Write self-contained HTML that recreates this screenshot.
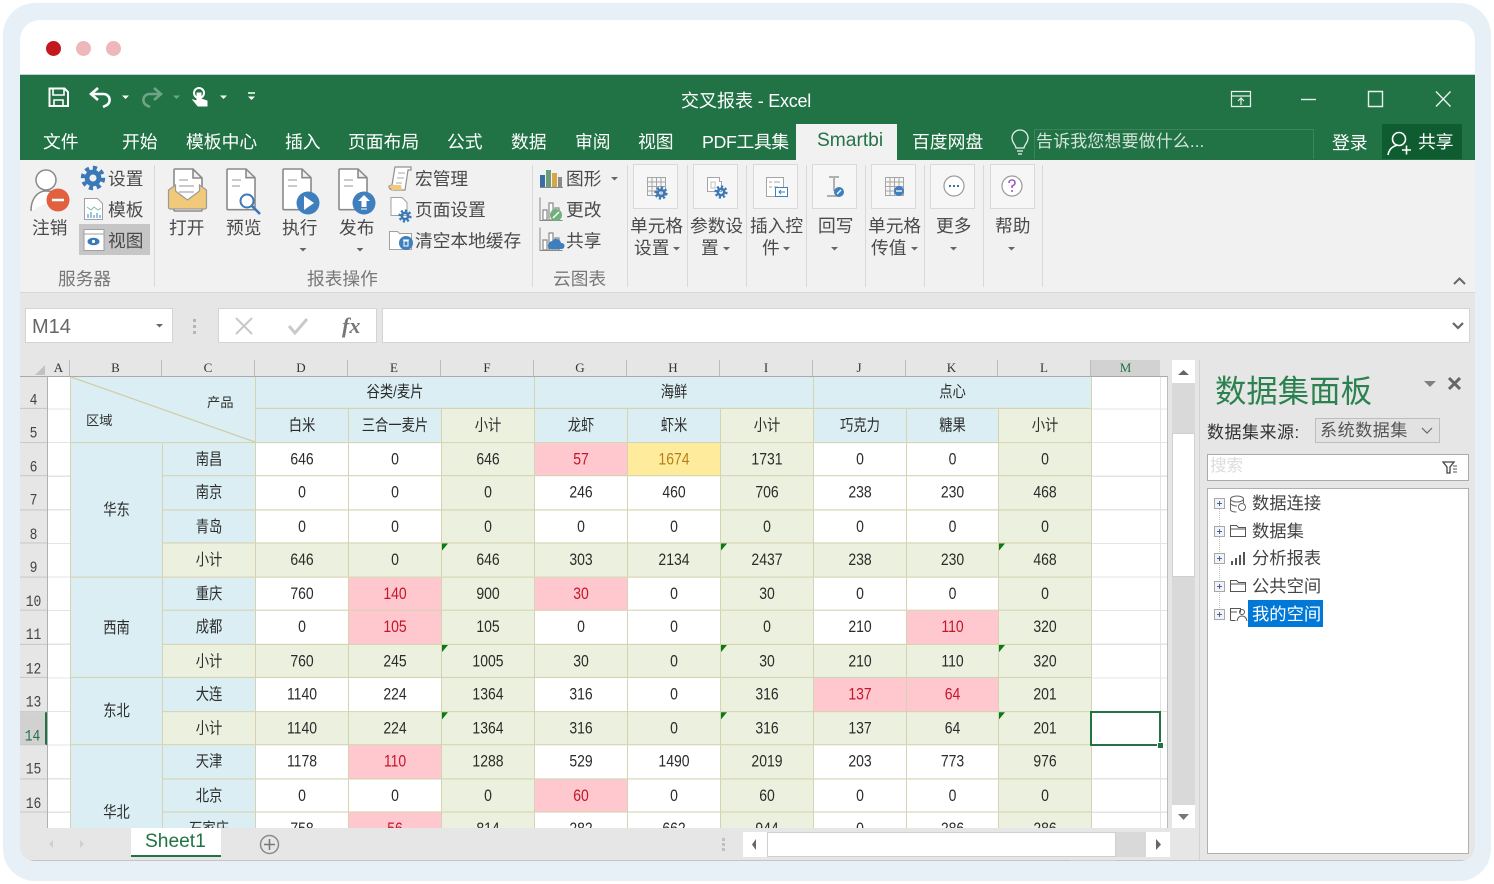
<!DOCTYPE html>
<html lang="zh"><head><meta charset="utf-8"><title>交叉报表 - Excel</title>
<style>
html,body{margin:0;padding:0;background:#fff}
body{width:1494px;height:884px;position:relative;overflow:hidden;font-family:"Liberation Sans","Noto Sans CJK SC",sans-serif;color:#444}
.outer{position:absolute;left:3px;top:3px;width:1488px;height:878px;background:#e6f0f6;border-radius:32px}
.win{position:absolute;left:20px;top:20px;width:1455px;height:841px;overflow:hidden;border-radius:20px 20px 14px 14px;background:#fff}
.in{position:absolute;left:-20px;top:-20px;width:1494px;height:884px;filter:blur(.35px)}
.b{position:absolute}
.t{position:absolute;line-height:20px;white-space:nowrap;font-size:18px;color:#4a4a4a}
.w{color:#fff}
.m{font-size:17.8px}
.rb{font-size:17.7px;margin-top:1px}
.gl{color:#777;font-size:17.7px;margin-top:1px}
.dot{position:absolute;top:41px;width:15px;height:15px;border-radius:50%}
.sep{position:absolute;width:1px;top:165px;height:122px;background:#d8d8d8}
.bx{position:absolute;top:164px;height:45px;background:#f6f6f6;border:1px solid #d9d9d9;box-sizing:border-box}
svg.ov{position:absolute;left:0;top:0;width:1494px;height:884px;z-index:5;pointer-events:none}
.cols{position:absolute;left:48px;top:360px;height:16px;display:grid;grid-template-columns:22px 92px 93px 93px 93px 93px 93px 93px 93px 93px 92px 93px 69px;background:#e6e6e6}
.cols div{font:13px/16px "Liberation Serif",serif;text-align:center;color:#333;border-right:1px solid #bcbcbc;box-sizing:border-box}
.sheet{position:absolute;left:20px;top:376px;width:1148px;height:452px;overflow:hidden;background:#fff;border-top:1px solid #aaa;box-sizing:border-box;border-right:1px solid #bbb}
.sc{position:absolute;left:0;top:-1px;width:1148px;height:420px;transform:scaleY(1.18);transform-origin:0 0}
.lines{position:absolute;left:28px;top:0;width:1120px;height:420px;background:repeating-linear-gradient(to bottom,transparent 0,transparent 27.48px,#e4e4e4 27.48px,#e4e4e4 28.48px)}
.rows{position:absolute;left:0;top:0;width:28px;border-right:1px solid #b0b0b0;box-sizing:border-box}
.rows div{height:28.48px;box-sizing:border-box;background:#e6e6e6;border-bottom:1px solid #c9c9c9;font:13px/15px "Liberation Mono",monospace;color:#444;text-align:center;padding-top:13px}
.rows .sel{background:#d1d1d1;color:#217346;border-right:2px solid #217346}
.g{position:absolute;left:51px;top:0;display:grid;grid-template-columns:92px 93px 93px 93px 93px 93px 93px 93px 93px 92px 93px;grid-auto-rows:28.48px;box-shadow:-1px 0 0 #d6d3b2}
.g div{box-sizing:border-box;border-right:1px solid #d6d3b2;border-bottom:1px solid #d6d3b2;background:#fff;text-align:center;font-size:14px;line-height:27.5px;color:#2b2b2b;position:relative;white-space:nowrap}
.g .h{background:#daeef3;font-size:13.3px}
.g .s{background:#ebf1de}
.g .r{background:#ffc7ce;color:#c4162a}
.g .y{background:#ffeb9c;color:#b5801a}
.g .x::before{content:"";position:absolute;left:0;top:0;border-top:6px solid #0c7a12;border-right:6px solid transparent}
.g .m2{grid-row:span 2}.g .m3{grid-row:span 3}.g .m4{grid-row:span 4}
.g .a2{grid-column:span 2;grid-row:span 2}.g .a3{grid-column:span 3}
.tree{position:absolute;font-size:17.3px;line-height:22px;color:#444;white-space:nowrap}
</style></head><body>
<div class="outer"></div>
<div class="win"><div class="in">
<div class="dot" style="left:46px;background:#c1191f"></div>
<div class="dot" style="left:76px;background:#eeb8bb"></div>
<div class="dot" style="left:106px;background:#eeb8bb"></div>
<div class="b" style="left:0;top:74px;width:1494px;height:1px;background:#b9d4de"></div>
<div class="b" style="left:0;top:75px;width:1494px;height:85px;background:#217346"></div>
<div class="b" style="left:0;top:160px;width:1494px;height:132px;background:#f1f1f1;border-bottom:1px solid #d6d6d6;box-sizing:content-box"></div>
<div class="b" style="left:0;top:293px;width:1494px;height:568px;background:#e6e6e6"></div>

<div class="t w" style="left:681px;top:91px">交叉报表<span style="letter-spacing:-.25px"> - Excel</span></div>
<div class="t w m" style="left:43px;top:132px">文件</div>
<div class="t w m" style="left:122px;top:132px">开始</div>
<div class="t w m" style="left:186px;top:132px">模板中心</div>
<div class="t w m" style="left:285px;top:132px">插入</div>
<div class="t w m" style="left:348px;top:132px">页面布局</div>
<div class="t w m" style="left:447px;top:132px">公式</div>
<div class="t w m" style="left:511px;top:132px">数据</div>
<div class="t w m" style="left:575px;top:132px">审阅</div>
<div class="t w m" style="left:638px;top:132px">视图</div>
<div class="t w m" style="left:702px;top:132px;letter-spacing:-.35px">PDF工具集</div>
<div class="b" style="left:796px;top:124px;width:101px;height:37px;background:#f1f1f1"></div>
<div class="t" style="left:817px;top:131px;font-size:19.2px;color:#217346">Smartbi</div>
<div class="t w m" style="left:912px;top:132px">百度网盘</div>
<div class="b" style="left:1034px;top:129px;width:280px;height:30px;border:1px solid #3a8559;border-bottom:0;box-sizing:border-box"></div>
<div class="t" style="left:1036px;top:132px;font-size:17px;color:#d3e4da;letter-spacing:.1px">告诉我您想要做什么...</div>
<div class="t w m" style="left:1332px;top:133px">登录</div>
<div class="b" style="left:1382px;top:124px;width:80px;height:35px;background:#0f5c30"></div>
<div class="t w m" style="left:1418px;top:132px">共享</div>

<div class="t rb" style="left:32px;top:217px">注销</div>
<div class="b" style="left:79px;top:224px;width:71px;height:31px;background:#c6c6c6"></div>
<div class="t rb" style="left:108px;top:168px">设置</div>
<div class="t rb" style="left:108px;top:199px">模板</div>
<div class="t rb" style="left:108px;top:230px">视图</div>
<div class="sep" style="left:154px"></div>
<div class="t gl" style="left:58px;top:268px">服务器</div>
<div class="t rb" style="left:169px;top:217px">打开</div>
<div class="t rb" style="left:226px;top:217px">预览</div>
<div class="t rb" style="left:282px;top:217px">执行</div>
<div class="t rb" style="left:339px;top:217px">发布</div>
<div class="t rb" style="left:415px;top:168px">宏管理</div>
<div class="t rb" style="left:415px;top:199px">页面设置</div>
<div class="t rb" style="left:415px;top:230px">清空本地缓存</div>
<div class="t gl" style="left:307px;top:268px">报表操作</div>
<div class="sep" style="left:532px"></div>
<div class="t rb" style="left:566px;top:168px">图形</div>
<div class="t rb" style="left:566px;top:199px">更改</div>
<div class="t rb" style="left:566px;top:230px">共享</div>
<div class="t gl" style="left:553px;top:268px">云图表</div>
<div class="sep" style="left:627px"></div><div class="sep" style="left:687px"></div><div class="sep" style="left:746px"></div><div class="sep" style="left:806px"></div><div class="sep" style="left:865px"></div><div class="sep" style="left:924px"></div><div class="sep" style="left:983px"></div><div class="sep" style="left:1042px"></div>
<div class="bx" style="left:633px;width:45px"></div><div class="bx" style="left:693px;width:45px"></div><div class="bx" style="left:753px;width:45px"></div><div class="bx" style="left:812px;width:45px"></div><div class="bx" style="left:871px;width:45px"></div><div class="bx" style="left:930px;width:45px"></div><div class="bx" style="left:990px;width:45px"></div>
<div class="t rb" style="left:630px;top:215px">单元格</div><div class="t rb" style="left:634px;top:237px">设置</div>
<div class="t rb" style="left:690px;top:215px">参数设</div><div class="t rb" style="left:701px;top:237px">置</div>
<div class="t rb" style="left:750px;top:215px">插入控</div><div class="t rb" style="left:762px;top:237px">件</div>
<div class="t rb" style="left:818px;top:215px">回写</div>
<div class="t rb" style="left:868px;top:215px">单元格</div><div class="t rb" style="left:871px;top:237px">传值</div>
<div class="t rb" style="left:936px;top:215px">更多</div>
<div class="t rb" style="left:995px;top:215px">帮助</div>

<div class="b" style="left:25px;top:308px;width:148px;height:35px;background:#fff;border:1px solid #d4d4d4;box-sizing:border-box"></div>
<div class="t" style="left:32px;top:317px;font-size:20px;color:#666">M14</div>
<div class="b" style="left:218px;top:308px;width:159px;height:35px;background:#fff;border:1px solid #d4d4d4;box-sizing:border-box"></div>
<div class="b" style="left:382px;top:308px;width:1088px;height:35px;background:#fff;border:1px solid #d4d4d4;box-sizing:border-box"></div>
<div class="t" style="left:342px;top:316px;font:italic bold 22px/20px 'Liberation Serif',serif;color:#777"><i>fx</i></div>

<div class="b" style="left:20px;top:360px;width:28px;height:16px;background:#e6e6e6"></div>
<div class="cols"><div>A</div><div>B</div><div>C</div><div>D</div><div>E</div><div>F</div><div>G</div><div>H</div><div>I</div><div>J</div><div>K</div><div>L</div><div style="background:#d2d2d2;color:#217346;border-bottom:2px solid #217346;border-right:0">M</div></div>

<div class="sheet"><div class="sc">
<div class="lines"></div>
<div class="rows"><div>4</div><div>5</div><div>6</div><div>7</div><div>8</div><div>9</div><div>10</div><div>11</div><div>12</div><div>13</div><div class="sel">14</div><div>15</div><div>16</div><div>17</div><div>18</div></div>
<div class="b" style="left:1140px;top:0;width:1px;height:420px;background:#e4e4e4"></div>
<div class="g">
<div class="h a2"></div><div class="h a3">谷类/麦片</div><div class="h a3">海鲜</div><div class="h a3">点心</div>
<div class="h">白米</div><div class="h">三合一麦片</div><div class="h s">小计</div><div class="h">龙虾</div><div class="h">虾米</div><div class="h s">小计</div><div class="h">巧克力</div><div class="h">糖果</div><div class="h s">小计</div>
<div class="h m4" style="line-height:114px">华东</div><div class="h">南昌</div><div>646</div><div>0</div><div class="s">646</div><div class="r">57</div><div class="y">1674</div><div class="s">1731</div><div>0</div><div>0</div><div class="s">0</div>
<div class="h">南京</div><div>0</div><div>0</div><div class="s">0</div><div>246</div><div>460</div><div class="s">706</div><div>238</div><div>230</div><div class="s">468</div>
<div class="h">青岛</div><div>0</div><div>0</div><div class="s">0</div><div>0</div><div>0</div><div class="s">0</div><div>0</div><div>0</div><div class="s">0</div>
<div class="h s">小计</div><div class="s">646</div><div class="s">0</div><div class="s x">646</div><div class="s">303</div><div class="s">2134</div><div class="s x">2437</div><div class="s">238</div><div class="s">230</div><div class="s x">468</div>
<div class="h m3" style="line-height:86px">西南</div><div class="h">重庆</div><div>760</div><div class="r">140</div><div class="s">900</div><div class="r">30</div><div>0</div><div class="s">30</div><div>0</div><div>0</div><div class="s">0</div>
<div class="h">成都</div><div>0</div><div class="r">105</div><div class="s">105</div><div>0</div><div>0</div><div class="s">0</div><div>210</div><div class="r">110</div><div class="s">320</div>
<div class="h s">小计</div><div class="s">760</div><div class="s">245</div><div class="s x">1005</div><div class="s">30</div><div class="s">0</div><div class="s x">30</div><div class="s">210</div><div class="s">110</div><div class="s x">320</div>
<div class="h m2" style="line-height:56px">东北</div><div class="h">大连</div><div>1140</div><div>224</div><div class="s">1364</div><div>316</div><div>0</div><div class="s">316</div><div class="r">137</div><div class="r">64</div><div class="s">201</div>
<div class="h s">小计</div><div class="s">1140</div><div class="s">224</div><div class="s x">1364</div><div class="s">316</div><div class="s">0</div><div class="s x">316</div><div class="s">137</div><div class="s">64</div><div class="s x">201</div>
<div class="h m4" style="line-height:114px">华北</div><div class="h">天津</div><div>1178</div><div class="r">110</div><div class="s">1288</div><div>529</div><div>1490</div><div class="s">2019</div><div>203</div><div>773</div><div class="s">976</div>
<div class="h">北京</div><div>0</div><div>0</div><div class="s">0</div><div class="r">60</div><div>0</div><div class="s">60</div><div>0</div><div>0</div><div class="s">0</div>
<div class="h">石家庄</div><div>758</div><div class="r">56</div><div class="s">814</div><div>282</div><div>662</div><div class="s">944</div><div>0</div><div>286</div><div class="s">286</div>
</div>
</div></div>
<div class="t" style="left:207px;top:393px;font-size:13.3px;color:#333">产品</div>
<div class="t" style="left:86px;top:411px;font-size:13.3px;color:#333">区域</div>
<div class="b" style="left:1090px;top:711px;width:71px;height:35px;border:2px solid #217346;box-sizing:border-box"></div>
<div class="b" style="left:1157px;top:742px;width:5px;height:5px;background:#217346;border:1px solid #fff;box-sizing:content-box"></div>

<div class="b" style="left:1172px;top:360px;width:23px;height:468px;background:#d9d9d9"></div>
<div class="b" style="left:1172px;top:360px;width:23px;height:23px;background:#fff"></div>
<div class="b" style="left:1172px;top:433px;width:23px;height:144px;background:#fff;border:1px solid #d0d0d0;box-sizing:border-box"></div>
<div class="b" style="left:1172px;top:805px;width:23px;height:23px;background:#fff"></div>
<div class="b" style="left:1199px;top:360px;width:1px;height:501px;background:#d2d2d2"></div>

<div class="b" style="left:131px;top:828px;width:90px;height:29px;background:#fff;border-bottom:2px solid #217346;box-sizing:border-box"></div>
<div class="t" style="left:145px;top:832px;font-size:19.2px;color:#217346">Sheet1</div>
<div class="b" style="left:743px;top:832px;width:24px;height:25px;background:#fff"></div>
<div class="b" style="left:767px;top:832px;width:349px;height:25px;background:#fff;border:1px solid #cfcfcf;box-sizing:border-box"></div>
<div class="b" style="left:1116px;top:832px;width:30px;height:25px;background:#d9d9d9"></div>
<div class="b" style="left:1146px;top:832px;width:24px;height:25px;background:#fff"></div>
<div class="b" style="left:20px;top:860px;width:1455px;height:1px;background:#c4c4c4"></div>
<div class="b" style="left:1070px;top:860px;width:45px;height:4px;background:#cfcfcf"></div>

<div class="t" style="left:1215px;top:376px;font-size:31.4px;line-height:32px;color:#2b8250">数据集面板</div>
<div class="t" style="left:1207px;top:423px;font-size:17px;color:#333;letter-spacing:.5px">数据集来源:</div>
<div class="b" style="left:1315px;top:418px;width:125px;height:25px;background:#e2e2e2;border:1px solid #bdbdbd;box-sizing:border-box"></div>
<div class="t" style="left:1320px;top:421px;font-size:17px;letter-spacing:.6px;color:#555">系统数据集</div>
<div class="b" style="left:1207px;top:454px;width:262px;height:27px;background:#fff;border:1px solid #aaa;box-sizing:border-box"></div>
<div class="t" style="left:1210px;top:456px;font-size:16.5px;color:#dcdcdc">搜索</div>
<div class="b" style="left:1207px;top:488px;width:262px;height:366px;background:#fff;border:1px solid #b0b0b0;box-sizing:border-box"></div>
<div class="tree" style="left:1252px;top:492px">数据连接</div>
<div class="tree" style="left:1252px;top:520px">数据集</div>
<div class="tree" style="left:1252px;top:547px">分析报表</div>
<div class="tree" style="left:1252px;top:575px">公共空间</div>
<div class="b" style="left:1248px;top:600px;width:75px;height:27px;background:#0078d7"></div>
<div class="tree" style="left:1252px;top:603px;color:#fff">我的空间</div>

<svg class="ov" viewBox="0 0 1494 884" fill="none">
<defs>
<path id="doc" d="M1 2q0-1 1-1h18l9 9v32q0 1-1 1H2q-1 0-1-1zM20 1v9h9" fill="#fff" stroke="#8a8a8a" stroke-width="1.6"/>
<g id="gear"><circle r="3.2" stroke="#3a78b8" stroke-width="2.6"/><circle r="5.4" stroke="#3a78b8" stroke-width="2.4" stroke-dasharray="2.2 2"/></g>
<g id="gd" stroke="#a5a5a5" stroke-width="1"><path d="M.5.5h18v18H.5zM.5 5h18M.5 9.500h18M.5 14h18M5 .5v18M9.500.5v18M14 .5v18"/></g>
<path id="cr" d="M0 0h7l-3.500 3.500z" fill="#666"/>
<path id="cw" d="M0 0h7l-3.500 3.500z" fill="#fff"/>
<g id="chart"><path d="M1 .5v23M.5 23.500h23" stroke="#888" stroke-width="1"/><path d="M4 13h4v10H4zM10 6h4v17h-4zM16 11h4v12h-4z" stroke="#8a8a8a" stroke-width="1.200" fill="#fff"/></g>
<g id="plus"><path d="M.5.500h10v10H.5z" stroke="#a8a8a8" fill="#f3f3f3"/><path d="M3 5.500h5M5.500 3v5" stroke="#4a5fa5"/></g>
</defs>
<!-- title bar icons -->
<path d="M49.500 88.500h15l3.500 3.500v14H49.500z" stroke="#fff" stroke-width="2"/><path d="M53 89v6h11v-6M54 106v-6h9v6" stroke="#fff" stroke-width="1.600"/>
<path d="M91 94h13a6 6 0 0 1 2 11.500l-3 1.500" stroke="#fff" stroke-width="2.600"/><path d="M98 88l-7 6 7 6" stroke="#fff" stroke-width="2.600"/>
<use href="#cw" x="122" y="95.500"/>
<g opacity=".35"><path d="M161 94h-12a6 6 0 0 0-2 11.500l3 1.500" stroke="#fff" stroke-width="2.600"/><path d="M154 88l7 6-7 6" stroke="#fff" stroke-width="2.600"/><use href="#cw" x="173" y="95.500"/></g>
<circle cx="199" cy="93" r="5" stroke="#fff" stroke-width="2"/><path d="M197 93h4v6l6 2v5h-9l-5-6 4 1z" fill="#fff" stroke="#fff"/>
<use href="#cw" x="220" y="95.500"/>
<path d="M248 93h7" stroke="#fff" stroke-width="1.500"/><use href="#cw" x="248" y="96.500"/>
<path d="M1231.500 91.500h19v15h-19zM1231.500 96h19M1241 105v-7M1238 101l3-3 3 3" stroke="#e8f1ec" stroke-width="1.200"/>
<path d="M1301 99.500h15" stroke="#e8f1ec" stroke-width="1.400"/>
<path d="M1368.500 91.500h14v15h-14z" stroke="#e8f1ec" stroke-width="1.400"/>
<path d="M1436 91.500l14.500 15M1450.500 91.500l-14.500 15" stroke="#e8f1ec" stroke-width="1.400"/>
<path d="M1016 148c0-3-4-5-4-10a8 8 0 0 1 16 0c0 5-4 7-4 10zM1017 151h6M1018 154h4" stroke="#e8f1ec" stroke-width="1.300"/>
<circle cx="1399" cy="139" r="6.500" stroke="#fff" stroke-width="1.600"/><path d="M1388 155c1-6 5-9 10-10M1402 150h9M1406.500 145.500v9" stroke="#fff" stroke-width="1.600"/>

<!-- server group -->
<circle cx="46" cy="180" r="10" fill="#fff" stroke="#8a8a8a" stroke-width="1.500"/><path d="M31 211c0-13 7-20 15-20s10 3 12 6" fill="#fff" stroke="#8a8a8a" stroke-width="1.500"/>
<circle cx="58" cy="200" r="11.500" fill="#e0603f"/><path d="M52 200h12" stroke="#fff" stroke-width="2.500"/>
<use href="#gear" transform="translate(93 178) scale(1.850)"/>
<path d="M84.500 198.500h13l5 5v16h-18z" fill="#fff" stroke="#a0a0a0"/><path d="M87 207l4 3 3-3 4 3 3-2" stroke="#7cc2a0"/><path d="M88 218v-4M91 218v-6M94 218v-3M97 218v-5M100 218v-3" stroke="#7aaed8" stroke-width="1.500"/>
<path d="M84 229.500h20v21H84zM84 234h20" fill="#fff" stroke="#a0a0a0"/><ellipse cx="93.500" cy="241.500" rx="6" ry="3.800" fill="#3a78b8"/><circle cx="93.500" cy="241.500" r="1.600" fill="#fff"/>
<!-- report group -->
<use href="#doc" transform="translate(173 168)"/>
<path d="M179 180h9M179 186h15M179 192h15" stroke="#aaa" stroke-width="1.300"/>
<path d="M168.500 190v17q0 2 2 2h34q2 0 2-2v-17l-7-5v6l-12 9-12-9v-6z" fill="#f0c97a" stroke="#9a9a9a" stroke-width="1.200"/>
<use href="#doc" transform="translate(226 168) scale(1 .97)"/><path d="M232 180h9M232 186h8" stroke="#aaa" stroke-width="1.300"/>
<circle cx="247" cy="201" r="6.500" fill="#fff" stroke="#3a78b8" stroke-width="2"/><path d="M252 206l8 8" stroke="#3a78b8" stroke-width="2.600"/>
<use href="#doc" transform="translate(282 168) scale(1 .97)"/><path d="M288 180h9M288 186h9" stroke="#aaa" stroke-width="1.300"/>
<circle cx="308" cy="203" r="11.500" fill="#3f7fbd"/><path d="M304 196l10 7-10 7z" fill="#fff"/>
<use href="#doc" transform="translate(338 168) scale(1 .97)"/><path d="M344 180h9M344 186h9" stroke="#aaa" stroke-width="1.300"/>
<circle cx="364" cy="203" r="11.500" fill="#3f7fbd"/><path d="M364 195l6 6h-3.500v6h-5v-6H358z" fill="#fff"/><path d="M361 209h6" stroke="#fff"/>
<use href="#cr" x="299.500" y="248"/><use href="#cr" x="356.500" y="248"/>
<path d="M394 190q-5 0-5-4l3-1 3-18h16v3h-3l-3 20z" fill="#fff" stroke="#909090" stroke-width="1.200"/><path d="M389 186l3-1h9l1 5h-10z" fill="#f0c97a"/><path d="M398 173h7M397 178h7M396 183h6" stroke="#aaa"/>
<path d="M391 197.500h11l5 5v13h-16z" fill="#fff" stroke="#a0a0a0"/><use href="#gear" transform="translate(405 216)"/>
<path d="M389.500 249.500v-18h8l2 2h12v16z" fill="#fff" stroke="#a0a0a0"/><circle cx="406" cy="243" r="7" fill="#3f7fbd"/><path d="M403 240h6M404 241h4v5h-4z" stroke="#fff"/>
<!-- cloud charts -->
<path d="M540 187.500h23" stroke="#888"/><path d="M540 175h5v12h-5z" fill="#3a6ea5"/><path d="M546 170h5v17h-5z" fill="#6b9e78"/><path d="M552 173h5v14h-5z" fill="#d9a54a"/><path d="M558 177h4v10h-4z" fill="#8a8a8a"/>
<use href="#chart" transform="translate(539 197)"/><circle cx="556" cy="215" r="6" fill="#6fb07e"/><path d="M553 218l6-6" stroke="#fff" stroke-width="1.500"/>
<use href="#chart" transform="translate(539 227)"/><path d="M549 249a5 5 0 0 1 3-8 5 5 0 0 1 9 2 3 3 0 0 1 1 6z" fill="#3f7fbd"/>
<use href="#cr" x="611" y="177"/>
<!-- big buttons -->
<use href="#gd" transform="translate(647 177)"/><use href="#gear" transform="translate(661 193)"/>
<path d="M707.500 177.500h12v4l2 0v10h-14z" stroke="#a5a5a5" fill="#fff"/><path d="M711 182h4v6h-4z" stroke="#c0c0c0"/><use href="#gear" transform="translate(721 192)"/>
<path d="M766.500 177.500h17v19h-17z" stroke="#a5a5a5" fill="#fff"/><path d="M769 182h3M774 182h6M769 187h3M774 187h4" stroke="#a5a5a5"/><path d="M775.500 187.500h12v9h-12z" stroke="#3f7fbd" fill="#fff"/><path d="M785 192h-6M781 190l-2 2 2 2" stroke="#3f7fbd"/>
<path d="M829 177h10M834 178v13M827 196h12" stroke="#999" stroke-width="1.500"/><circle cx="839" cy="192" r="5" fill="#3f7fbd"/><path d="M837 194l4-4" stroke="#fff" stroke-width="1.300"/>
<use href="#gd" transform="translate(885 177)"/><circle cx="899" cy="191" r="5" fill="#3f7fbd"/><path d="M896 191h6" stroke="#fff" stroke-width="1.300"/>
<circle cx="954" cy="186" r="10" fill="#fff" stroke="#9a9a9a" stroke-width="1.200"/><path d="M949 186h2M953 186h2M957 186h2" stroke="#3f6fa5" stroke-width="2"/>
<circle cx="1012" cy="186" r="10" fill="#fff" stroke="#9a9a9a" stroke-width="1.200"/><path d="M1009 183q0-3 3-3t3 3q0 2-3 3v2" stroke="#9a5fc0" stroke-width="1.600"/><path d="M1012 190v2" stroke="#9a5fc0" stroke-width="1.600"/>
<use href="#cr" x="673" y="247"/><use href="#cr" x="723" y="247"/><use href="#cr" x="783" y="247"/><use href="#cr" x="831" y="247"/><use href="#cr" x="911" y="247"/><use href="#cr" x="950" y="247"/><use href="#cr" x="1008" y="247"/>
<path d="M1454 284l5.500-5.500 5.500 5.500" stroke="#666" stroke-width="2"/>
<!-- formula bar -->
<use href="#cr" x="156" y="324"/>
<path d="M193 319h3v3h-3zM193 325h3v3h-3zM193 331h3v3h-3z" fill="#b5b5b5"/>
<path d="M236 318l16 16M252 318l-16 16" stroke="#c9c9c9" stroke-width="2"/>
<path d="M289 326l6 7 12-14" stroke="#c9c9c9" stroke-width="3"/>
<path d="M1453 323l5 5 5-5" stroke="#666" stroke-width="2.200"/>
<path d="M35 375h10v-10z" fill="#c2c2c2"/>
<!-- diagonal -->
<path d="M71 377L255 442" stroke="#d0cca8" stroke-width="1.200"/>
<!-- scroll arrows -->
<path d="M1178 375l5.500-5 5.500 5z" fill="#666"/>
<path d="M1178 814l5.500 6 5.500-6z" fill="#777"/>
<path d="M756 839v11l-4-5.500z" fill="#666"/>
<path d="M1156 839v11l5-5.500z" fill="#666"/>
<path d="M53 840v8l-4-4zM80 840v8l4-4z" fill="#cfcfcf"/>
<circle cx="269.500" cy="844.500" r="9" stroke="#8a8a8a" stroke-width="1.500"/><path d="M264 844.500h11M269.500 839v11" stroke="#777" stroke-width="1.500"/>
<path d="M722 838h3v3h-3zM722 843h3v3h-3zM722 848h3v3h-3z" fill="#c0c0c0"/>
<!-- panel -->
<path d="M1424 381h12l-6 6z" fill="#808080"/>
<path d="M1449 378l11 11M1460 378l-11 11" stroke="#666" stroke-width="3"/>
<path d="M1422 428l5 5 5-5" stroke="#666" stroke-width="1.200"/>
<path d="M1443 462h11l-4 5v6h-3v-6z" fill="#fff" stroke="#444" stroke-width="1.300"/><path d="M1453 466h4M1453 469h4M1453 472h4" stroke="#555"/>
<path d="M1219.500 509v103" stroke="#c4c4c4" stroke-dasharray="1 1"/>
<use href="#plus" x="1214" y="498"/><use href="#plus" x="1214" y="526"/><use href="#plus" x="1214" y="553"/><use href="#plus" x="1214" y="581"/><use href="#plus" x="1214" y="609"/>
<ellipse cx="1237" cy="499" rx="6.500" ry="3" stroke="#666" fill="#fff"/><path d="M1230.500 499v11q1 2 6 2M1243.500 499v4M1231 504q2 2 6 2" stroke="#666"/><circle cx="1242" cy="507" r="3.500" stroke="#666" fill="#fff"/>
<path d="M1230.500 536.500v-11h6l2 2h7v9z" stroke="#555" fill="#fff"/><path d="M1231 529h14" stroke="#555"/>
<path d="M1231 565v-4h2v4zM1235 565v-7h2v7zM1239 565v-10h2v10zM1243 565v-13h2v13z" fill="#555"/>
<path d="M1230.500 591.500v-11h6l2 2h7v9z" stroke="#555" fill="#fff"/><path d="M1231 584h14" stroke="#555"/>
<path d="M1230.500 620.500v-12h10v4M1230.500 620.500h5M1231 612h6" stroke="#555"/><circle cx="1242" cy="612" r="2.500" stroke="#555"/><path d="M1237 621q1-5 5-5t5 5" stroke="#555"/>
</svg>
</div></div>
</body></html>
